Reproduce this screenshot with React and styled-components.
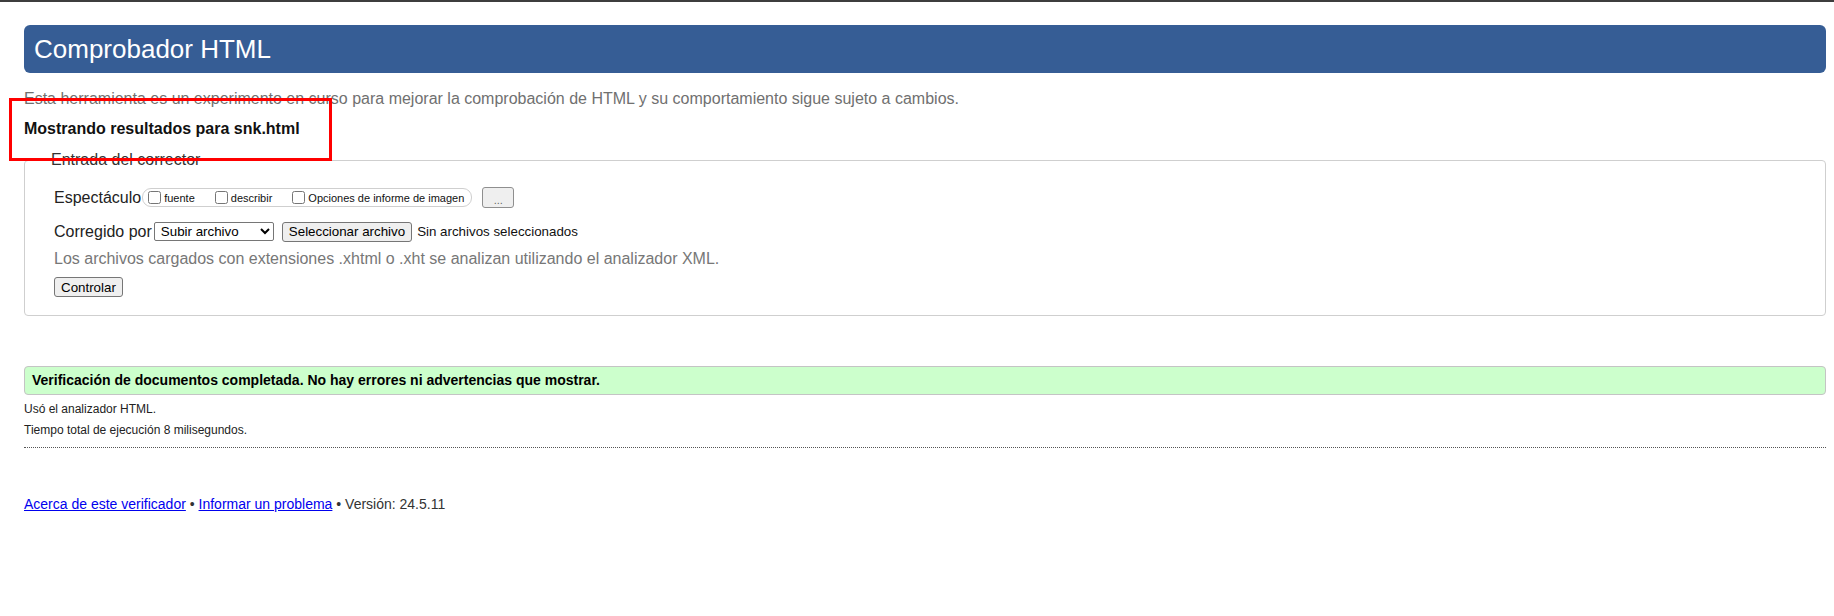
import styled, { createGlobalStyle } from 'styled-components';

const GlobalStyle = createGlobalStyle`
  body {
    margin: 0;
    background: #fff;
    color: #222;
    font-family: "Liberation Sans", Arial, sans-serif;
  }
`

const Screen = styled.div`
  position: relative;
  min-height: 616px;
`

const TopRule = styled.div`
  height: 2px;
  background: #3d3d3d;
`

const Page = styled.main`
  padding: 23px 8px 40px 24px;
`

const Banner = styled.h1`
  margin: 0;
  height: 48px;
  padding: 0 10px;
  background: #365d95;
  border-radius: 6px;
  color: #fff;
  font-size: 26px;
  font-weight: normal;
  line-height: 48px;
`

const Intro = styled.p`
  margin: 16px 0 0;
  font-size: 16px;
  line-height: 20px;
  color: #707070;
`

const ResultsTitle = styled.h2`
  margin: 10px 0 0;
  font-size: 16px;
  font-weight: bold;
  line-height: 20px;
  color: #111;
`

const Fieldset = styled.fieldset`
  margin: 12px 0 0;
  padding: 18px 28px 18px 29px;
  border: 1px solid #cfcfcf;
  border-radius: 4px;
  min-width: 0;
`

const Legend = styled.legend`
  margin-left: -5px;
  padding: 0 2px;
  font-size: 16px;
  line-height: 18px;
  color: #333;
`

const Row = styled.div`
  display: flex;
  align-items: center;
  height: 21px;
  margin-top: ${p => p.$gap || 0}px;
`

const FieldLabel = styled.span`
  font-size: 16px;
  line-height: 20px;
  color: #222;
`

const CheckGroup = styled.span`
  display: inline-flex;
  align-items: center;
  height: 17px;
  margin-left: 1px;
  padding: 0 7px 0 5px;
  border: 1px solid #cfcfcf;
  border-radius: 9px;
`

const CheckOption = styled.label`
  display: inline-flex;
  align-items: center;
  margin-right: ${p => (p.$last ? 0 : 20)}px;
  font-size: 11px;
  color: #111;

  input {
    width: 13px;
    height: 13px;
    margin: 0 3px 0 0;
  }
`

const Button = styled.button`
  height: ${p => p.$h || 20}px;
  margin-left: ${p => p.$ml || 0}px;
  padding: 0 6px;
  border: 1px solid #767676;
  border-radius: 3px;
  background: #efefef;
  color: #000;
  font-family: "Liberation Sans", Arial, sans-serif;
  font-size: 13.333px;
`

const DotsButton = styled(Button)`
  width: 32px;
  padding: 4px 0 0;
  border-color: #8f8f8f;
  color: #666;
  font-size: 11px;
`

const Select = styled.select`
  width: 120px;
  height: 19px;
  margin-left: 2px;
  padding: 0 2px;
  border: 1px solid #767676;
  border-radius: 2px;
  background: #fff;
  color: #000;
  font-family: "Liberation Sans", Arial, sans-serif;
  font-size: 13.333px;
`

const FileStatus = styled.span`
  margin-left: 5px;
  font-size: 13.333px;
  color: #111;
`

const Note = styled.p`
  margin: 7px 0 0;
  font-size: 16px;
  line-height: 20px;
  color: #777;
`

const SubmitRow = styled.div`
  margin-top: 8px;
`

const SuccessBox = styled.p`
  margin: 50px 0 0;
  padding: 5px 7px;
  border: 1px solid #c4c4c4;
  border-radius: 4px;
  background: #ccffcc;
  color: #000;
  font-size: 14px;
  font-weight: bold;
  line-height: 17px;
`

const Detail = styled.p`
  margin: ${p => p.$first ? '4px 0 0' : '0'};
  font-size: 12px;
  line-height: 21px;
  color: #222;
`

const DottedRule = styled.hr`
  margin: 6px 0 0;
  border: 0;
  border-top: 1px dotted #555;
`

const Footer = styled.footer`
  margin-top: 46px;
  font-size: 14px;
  line-height: 20px;
  color: #333;

  a {
    color: #0000ee;
  }
`

// Red highlight drawn over the page (annotation)
const Highlight = styled.div`
  position: absolute;
  left: 9px;
  top: 98px;
  width: 323px;
  height: 63px;
  box-sizing: border-box;
  border: 3px solid #ff0000;
  pointer-events: none;
`

const App = () => {
  return (
    <Screen>
      <GlobalStyle />
      <TopRule />
      <Page>
        <Banner>Comprobador HTML</Banner>
        <Intro>
          Esta herramienta es un experimento en curso para mejorar la comprobación de HTML y su comportamiento sigue sujeto a cambios.
        </Intro>
        <ResultsTitle>Mostrando resultados para snk.html</ResultsTitle>

        <Fieldset>
          <Legend>Entrada del corrector</Legend>
          <Row>
            <FieldLabel>Espectáculo</FieldLabel>
            <CheckGroup>
              <CheckOption><input type='checkbox' />fuente</CheckOption>
              <CheckOption><input type='checkbox' />describir</CheckOption>
              <CheckOption $last><input type='checkbox' />Opciones de informe de imagen</CheckOption>
            </CheckGroup>
            <DotsButton type='button' $h={21} $ml={10}>...</DotsButton>
          </Row>
          <Row $gap={13}>
            <FieldLabel>Corregido por</FieldLabel>
            <Select defaultValue='file'>
              <option value='file'>Subir archivo</option>
              <option value='address'>Dirección</option>
              <option value='text'>Entrada de texto</option>
            </Select>
            <Button type='button' $ml={8}>Seleccionar archivo</Button>
            <FileStatus>Sin archivos seleccionados</FileStatus>
          </Row>
          <Note>Los archivos cargados con extensiones .xhtml o .xht se analizan utilizando el analizador XML.</Note>
          <SubmitRow>
            <Button type='submit'>Controlar</Button>
          </SubmitRow>
        </Fieldset>

        <SuccessBox>Verificación de documentos completada. No hay errores ni advertencias que mostrar.</SuccessBox>
        <Detail $first>Usó el analizador HTML.</Detail>
        <Detail>Tiempo total de ejecución 8 milisegundos.</Detail>
        <DottedRule />

        <Footer>
          <a href='#about'>Acerca de este verificador</a> • <a href='#report'>Informar un problema</a> • Versión: 24.5.11
        </Footer>
      </Page>
      <Highlight />
    </Screen>
  )
}

export default App;
